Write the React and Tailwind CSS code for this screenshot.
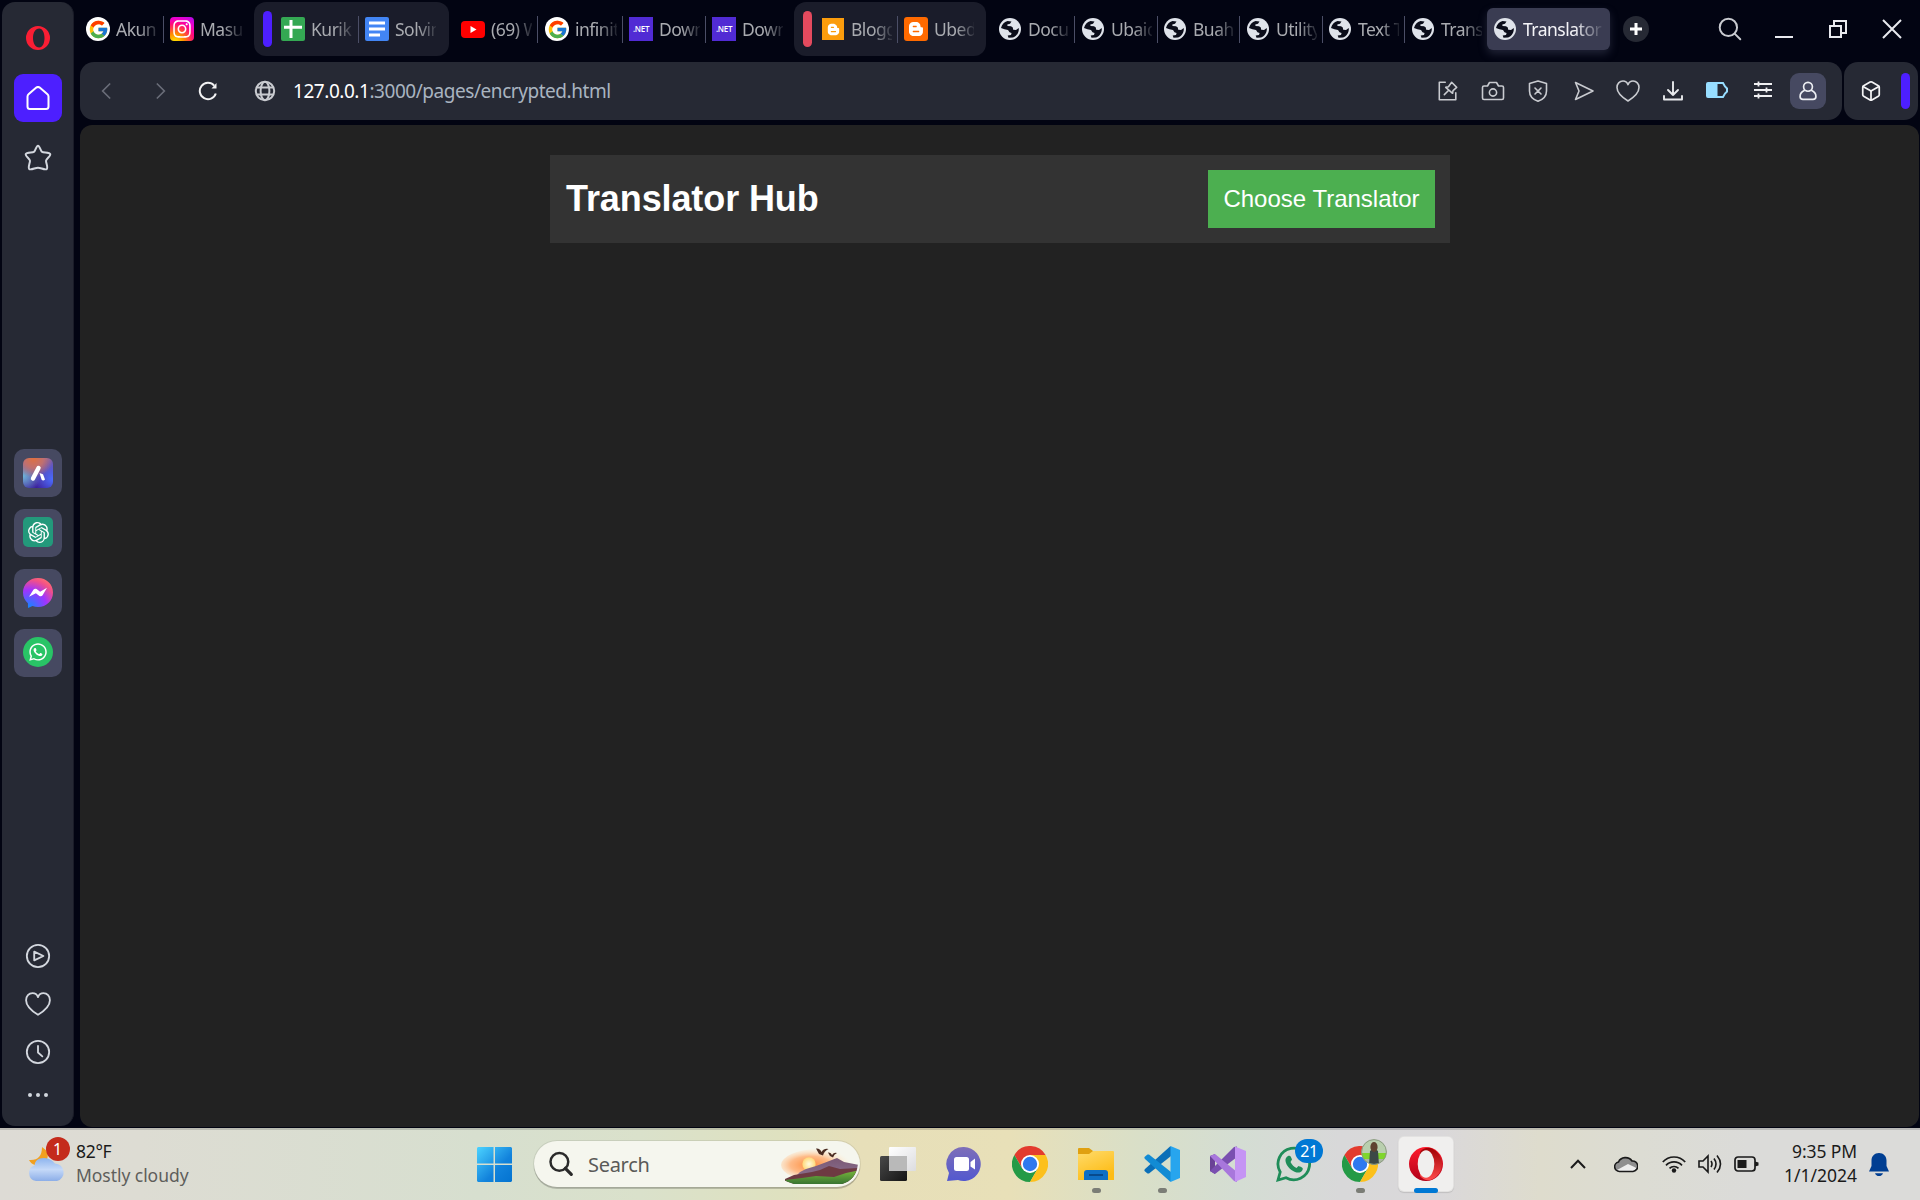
import React from "react";
import { FcGoogle } from "react-icons/fc";
import { FaWhatsapp, FaInstagram, FaBloggerB } from "react-icons/fa";
import { SiOpenai } from "react-icons/si";
import { Box } from "lucide-react";

const UI = "font-['Noto_Sans','Open_Sans',sans-serif]";

function Line({ size = 24, sw = 1.7, children, className = "" }) {
  return (
    <svg
      width={size}
      height={size}
      viewBox="0 0 24 24"
      fill="none"
      stroke="currentColor"
      strokeWidth={sw}
      strokeLinecap="round"
      strokeLinejoin="round"
      className={"block shrink-0 " + className}
    >
      {children}
    </svg>
  );
}

const HeartPath = () => (
  <path d="M12 22C8.500 19.800 1 14.500 1 8.500C1 4.800 3.500 2 7 2C9.500 2 11.200 3.600 12 5.600C12.800 3.600 14.500 2 17 2C20.500 2 23 4.800 23 8.500C23 14.500 15.500 19.800 12 22Z" />
);

/* ---------- favicons ---------- */

const GoogleIcon = () => (
  <span className="flex size-6 shrink-0 items-center justify-center rounded-full bg-white">
    <FcGoogle size={21} />
  </span>
);
const InstaIcon = () => (
  <span className="flex size-6 shrink-0 items-center justify-center rounded-[4px] bg-[radial-gradient(circle_at_20%_110%,#ffd500_10%,#ff8a00_30%,#ff0a7a_60%,#f000c8_75%,#8a10ff_110%)]">
    <FaInstagram size={20} color="white" />
  </span>
);
const SheetIcon = () => (
  <svg width="24" height="24" viewBox="0 0 24 24" className="shrink-0">
    <rect width="24" height="24" rx="2" fill="#34a853" />
    <path d="M3 10.200H21M10 3V21" stroke="#fff" strokeWidth="3" />
  </svg>
);
const DocIcon = () => (
  <svg width="24" height="24" viewBox="0 0 24 24" className="shrink-0">
    <rect width="24" height="24" rx="2" fill="#4285f4" />
    <path d="M4 6H20M4 12H20M4 18H15" stroke="#fff" strokeWidth="3" />
  </svg>
);
const YouTubeIcon = () => (
  <svg width="24" height="24" viewBox="0 0 24 24" className="shrink-0">
    <rect y="4" width="24" height="17" rx="4" fill="#f00" />
    <path d="M9.500 9V16L15.500 12.500Z" fill="#fff" />
  </svg>
);
const NetIcon = () => (
  <span className="flex size-6 shrink-0 items-center justify-center bg-[#512bd4] font-['Open_Sans',sans-serif] text-[8px] font-semibold tracking-[-0.3px] text-white">
    .NET
  </span>
);
const BlogYellow = () => (
  <span className="flex size-6 shrink-0 items-center justify-center">
    <span className="flex size-[22px] items-center justify-center bg-[#fb9c0c]">
      <FaBloggerB size={13} color="white" />
    </span>
  </span>
);
const BlogOrange = () => (
  <span className="flex size-6 shrink-0 items-center justify-center rounded-[3px] bg-[#ff6a00]">
    <FaBloggerB size={16} color="white" />
  </span>
);
const World = () => (
  <svg width="24" height="24" viewBox="0 0 24 24" className="shrink-0">
    <circle cx="12" cy="12" r="11" fill="#dfe3ea" />
    <path
      d="M3 11C4 7.500 6 5 9.500 4L13.500 4.500L12 6.700L9.300 7.500L9.500 9L13 9.300L14.800 10.500L15.200 12.800L18 13L20.800 11C21.200 15.500 18.500 19.300 15 20.500L10.500 20.800L9.700 18.600L13 18L13.600 16L11.500 15.200L10 13L6.500 12.300Z"
      fill="#0b0d1a"
    />
  </svg>
);

/* ---------- tab strip ---------- */

function Tab({ icon, text, width = "w-[84px]", divider = true, tw = "w-[42px]" }) {
  return (
    <div className={"flex h-[54px] shrink-0 items-center " + width}>
      {icon}
      <span
        className={
          "ml-[6px] overflow-hidden whitespace-nowrap text-[17.5px] leading-[26px] tracking-[-0.5px] text-[#a9abb0] [mask-image:linear-gradient(to_right,black_55%,transparent_108%)] " +
          tw
        }
      >
        {text}
      </span>
      {divider && <span className="ml-[5px] h-[27px] w-px shrink-0 bg-[#4b4e66]" />}
    </div>
  );
}

function TabStrip() {
  return (
    <div className="flex h-[62px] items-start pt-[2px]">
      <div className="flex w-[174px] shrink-0 pl-[6px]">
        <Tab icon={<GoogleIcon />} text="Akun" />
        <Tab icon={<InstaIcon />} text="Masu" divider={false} />
      </div>
      <div className="flex h-[54px] w-[195px] shrink-0 items-center rounded-[12px] bg-[#1a1c2a] pl-[9px]">
        <span className="mr-[9px] h-9 w-[9px] rounded-full bg-[#4d1fff]" />
        <Tab icon={<SheetIcon />} text="Kurik" />
        <Tab icon={<DocIcon />} text="Solvin" divider={false} width="w-[78px]" tw="w-[41px]" />
      </div>
      <div className="flex w-[345px] shrink-0 pl-[12px]">
        <Tab icon={<YouTubeIcon />} text="(69) W" tw="w-[41px]" />
        <Tab icon={<GoogleIcon />} text="infinit" />
        <Tab icon={<NetIcon />} text="Down" width="w-[83px]" tw="w-[41px]" />
        <Tab icon={<NetIcon />} text="Down" divider={false} width="w-[72px]" tw="w-[41px]" />
      </div>
      <div className="flex h-[54px] w-[192px] shrink-0 items-center rounded-[12px] bg-[#1a1c2a] pl-[9px]">
        <span className="mr-[9px] h-9 w-[9px] rounded-full bg-[#e44a5e]" />
        <Tab icon={<BlogYellow />} text="Blogg" width="w-[83px]" tw="w-[41px]" />
        <Tab icon={<BlogOrange />} text="Ubed" divider={false} width="w-[76px]" tw="w-[40px]" />
      </div>
      <div className="flex shrink-0 pl-[12px]">
        <Tab icon={<World />} text="Docu" width="w-[83px]" tw="w-[41px]" />
        <Tab icon={<World />} text="Ubaid" width="w-[82px]" tw="w-[41px]" />
        <Tab icon={<World />} text="Buah" width="w-[83px]" tw="w-[41px]" />
        <Tab icon={<World />} text="Utility" width="w-[82px]" tw="w-[41px]" />
        <Tab icon={<World />} text="Text T" width="w-[83px]" tw="w-[41px]" />
        <Tab icon={<World />} text="Trans" width="w-[76px]" divider={false} tw="w-[41px]" />
      </div>
      <div className="mt-[6px] flex h-[42px] w-[123px] shrink-0 items-center rounded-[6px] bg-[#3a3c52] pl-[6px] shadow-[0_4px_8px_rgba(90,92,120,0.35)]">
        <World />
        <span className="ml-[6px] w-[79px] overflow-hidden whitespace-nowrap text-[17.5px] leading-[26px] tracking-[-0.5px] text-[#f4f4f8] [mask-image:linear-gradient(to_right,black_65%,transparent_103%)]">
          Translator
        </span>
      </div>
      <div className="mt-[14px] ml-[13px] flex size-[26px] shrink-0 items-center justify-center rounded-full bg-[#262934] text-white">
        <Line size={24} sw={3}>
          <path d="M12 6V18M6 12H18" strokeLinecap="butt" />
        </Line>
      </div>
      <div className="flex h-[54px] flex-1 items-center pl-[68px] text-[#e8e9ee]">
        <Line size={26} sw={1.8} className="text-[#c9cbd0]">
          <circle cx="10.500" cy="10.500" r="8" />
          <path d="M16.500 16.500L21.500 21.500" />
        </Line>
        <svg width="20" height="20" viewBox="0 0 20 20" className="ml-[31px]">
          <path d="M1 18H19" stroke="currentColor" strokeWidth="2" />
        </svg>
        <svg width="20" height="20" viewBox="0 0 20 20" fill="none" stroke="currentColor" strokeWidth="2" className="ml-[34px]">
          <path d="M2 7H13V18H2ZM6 7V2H18V14H13" />
        </svg>
        <svg width="20" height="20" viewBox="0 0 20 20" stroke="currentColor" strokeWidth="2" className="ml-[34px]">
          <path d="M1 1L19 19M19 1L1 19" />
        </svg>
      </div>
    </div>
  );
}

/* ---------- address bar ---------- */

const Cell = ({ children }) => <span className="flex w-[45px] shrink-0 items-center justify-center">{children}</span>;

function AddressBar() {
  return (
    <div className="flex h-[58px] gap-[2px] pr-[2px]">
      <div className="flex flex-1 items-center rounded-[14px] bg-[#262934] text-[#c9cbd0]">
        <Line size={20} sw={2} className="ml-[16px] text-[#6a6d78]">
          <path d="M17 3L8 12L17 21" strokeLinecap="butt" strokeLinejoin="miter" />
        </Line>
        <Line size={20} sw={2} className="ml-[35px] text-[#6a6d78]">
          <path d="M7 3L16 12L7 21" strokeLinecap="butt" strokeLinejoin="miter" />
        </Line>
        <svg width="20" height="20" viewBox="0 0 20 20" fill="none" stroke="#f2f2f4" strokeWidth="2" className="ml-[27px]">
          <path d="M17.800 12.500A8.200 8.200 0 1 1 16.200 4.600" />
          <path d="M18.500 2V7.500H13.500Z" fill="#f2f2f4" stroke="none" />
        </svg>
        <svg width="22" height="22" viewBox="0 0 22 22" fill="none" stroke="#c9cbd0" strokeWidth="2" className="ml-[36px]">
          <circle cx="11" cy="11" r="9.200" />
          <ellipse cx="11" cy="11" rx="4.400" ry="9.200" />
          <path d="M2.500 7.500H19.500M2.500 14.500H19.500" />
        </svg>
        <span className="ml-[17px] text-[19px] tracking-[-0.45px] whitespace-nowrap text-[#a9b4c0]">
          <span className="text-white">127.0.0.1</span>:3000/pages/encrypted.html
        </span>
        <div className="ml-auto flex pr-[12px]">
          <Cell>
            <Line size={22} sw={1.7}>
              <path d="M9 2.500H2.500V21.500H20.500V14" />
              <path d="M16 2.500L21.500 8L17.500 11.500L17 14.500L9.500 8L12.500 7.300ZM12.800 11.200L8 16" />
            </Line>
          </Cell>
          <Cell>
            <Line size={24} sw={1.6}>
              <path d="M3 7H6.500L8.500 3.500H15.500L17.500 7H21C22 7 22.500 7.500 22.500 8.500V19C22.500 20 22 20.500 21 20.500H3C2 20.500 1.500 20 1.500 19V8.500C1.500 7.500 2 7 3 7Z" />
              <circle cx="12" cy="13.500" r="3.600" />
            </Line>
          </Cell>
          <Cell>
            <Line size={24} sw={1.6}>
              <path d="M12 2L20.500 4.500V12C20.500 17 17 20.500 12 22.300C7 20.500 3.500 17 3.500 12V4.500ZM9 9L15 15M15 9L9 15" />
            </Line>
          </Cell>
          <Cell>
            <Line size={24} sw={1.6} className="ml-[2px]">
              <path d="M3.500 3.500L21 12L3.500 20.500L7 12Z" />
            </Line>
          </Cell>
          <Cell>
            <Line size={24} sw={1.6}>
              <HeartPath />
            </Line>
          </Cell>
          <Cell>
            <Line size={24} sw={1.9} className="text-[#e8e9ec]">
              <path d="M12 3V16M7 11L12 16L17 11M3 17V20.500H21V17" />
            </Line>
          </Cell>
          <Cell>
            <svg width="24" height="18" viewBox="0 0 24 18" className="-mt-[2px] -ml-[2px]">
              <path d="M3 2H18L20 5.500L22 7.500V10.500L20 12.500L18 16H3Q2 16 2 15V3Q2 2 3 2Z" fill="none" stroke="#97ddff" strokeWidth="2" />
              <rect x="2" y="2" width="10.500" height="14" fill="#97ddff" />
            </svg>
          </Cell>
          <Cell>
            <svg width="20" height="18" viewBox="0 0 20 18" stroke="#f0f0f2" strokeWidth="1.800" className="-mt-[2px]">
              <path d="M1 3H19M1 9H19M1 15H19M5.500 0.500V5.500M13.500 6.500V11.500M5.500 12.500V17.500" />
            </svg>
          </Cell>
          <Cell>
            <span className="flex size-9 items-center justify-center rounded-[9px] bg-[#464961] text-[#eceef2]">
              <Line size={20} sw={2}>
                <circle cx="12" cy="7" r="5.300" />
                <path d="M7.500 11.500C4.500 13 2.500 15.500 2.500 18.500C2.500 20.800 4 22 6 22H18C20 22 21.500 20.800 21.500 18.500C21.500 15.500 19.500 13 16.500 11.500" />
              </Line>
            </span>
          </Cell>
        </div>
      </div>
      <div className="flex w-[74px] items-center rounded-[14px] bg-[#262934] pl-[16px]">
        <Box size={22} strokeWidth={1.9} color="#f4f4f6" />
        <span className="ml-[19px] h-9 w-[9px] rounded-full bg-[#4d1fff]" />
      </div>
    </div>
  );
}

/* ---------- sidebar ---------- */

const SideTile = ({ children }) => (
  <div className="mb-3 flex size-12 items-center justify-center rounded-[10px] bg-[#464961]">{children}</div>
);

function Sidebar() {
  return (
    <aside className="mt-[2px] ml-[2px] flex h-[1124px] w-[72px] shrink-0 flex-col items-center rounded-[13px] border-r border-[#1a1c28] bg-[#262934] text-[#d3d7de]">
      <svg width="24" height="24" viewBox="0 0 24 24" className="mt-[24px]">
        <path
          d="M12 0A12 12 0 0 0 12 24A12 12 0 0 0 12 0ZM13.200 2.500C16.600 2.500 18.500 7 18.500 12S16.600 21.500 13.200 21.500C9.500 21.500 7 17.500 7 12S9.500 2.500 13.200 2.500Z"
          fill="#fa1e34"
          fillRule="evenodd"
        />
      </svg>
      <div className="mt-[24px] flex size-12 items-center justify-center rounded-[9px] bg-[#4d1fff] text-white">
        <Line size={24} sw={2}>
          <path d="M1.500 10.500C1.500 9.500 2 8.700 2.800 8L10.300 1.600C11.500 0.700 12.500 0.700 13.700 1.600L21.200 8C22 8.700 22.500 9.500 22.500 10.500V20.500C22.500 22 21.500 23 20 23H4C2.500 23 1.500 22 1.500 20.500Z" />
        </Line>
      </div>
      <Line size={28} sw={1.7} className="mt-[22px]">
        <path d="M12 1.500C13.600 1.500 14.100 6 15.500 6.800C16.900 7.600 21.900 6.900 22.500 8.700C23 10.300 19.200 12.600 18.900 14.200C18.600 15.800 20.900 20.200 19.500 21.500C18 22.600 14.200 20.300 12 20.300C9.800 20.300 6 22.600 4.500 21.500C3.100 20.200 5.400 15.800 5.100 14.200C4.800 12.600 1 10.300 1.500 8.700C2.100 6.900 7.100 7.600 8.500 6.800C9.900 6 10.400 1.500 12 1.500Z" />
      </Line>
      <div className="mt-[277px] flex flex-col">
        <SideTile>
          <span className="flex size-[30px] items-center justify-center rounded-[6px] bg-[radial-gradient(circle_at_35%_0%,#e0703f_0%,#c07070_28%,transparent_55%),radial-gradient(circle_at_100%_70%,#4a6cff_0%,transparent_50%),radial-gradient(circle_at_0%_60%,#6fb4d8_0%,transparent_50%),linear-gradient(#7b62b0,#3a1f9c)]">
            <svg width="20" height="20" viewBox="0 0 20 20">
              <path d="M5 15.500L10.500 5" stroke="#fff" strokeWidth="4.400" strokeLinecap="round" />
              <path d="M11.500 10L15 11.200L17 16.500Q15 18.500 13.500 16.500Z" fill="#fff" />
            </svg>
          </span>
        </SideTile>
        <SideTile>
          <span className="-mt-[2px] ml-px flex size-[30px] items-center justify-center rounded-[5px] bg-[#23997b]">
            <SiOpenai size={21} color="white" />
          </span>
        </SideTile>
        <SideTile>
          <svg width="30" height="30" viewBox="0 0 30 30">
            <defs>
              <radialGradient id="msg" cx="0.200" cy="1" r="1.100">
                <stop offset="0" stopColor="#1088ff" />
                <stop offset="0.550" stopColor="#a033ff" />
                <stop offset="0.850" stopColor="#f0508a" />
                <stop offset="1" stopColor="#ff6a70" />
              </radialGradient>
            </defs>
            <path d="M15 0C6.500 0 0 6.200 0 14.500C0 19 1.800 22.500 4.900 25.200L5 30L9.500 28C11.200 28.600 13 29 15 29C23.500 29 30 22.800 30 14.500S23.500 0 15 0Z" fill="url(#msg)" />
            <path d="M6 18.700L10.400 11.700C11.100 10.600 12.600 10.300 13.600 11.100L17.100 13.700L24 9.800L19.600 17.300C18.900 18.400 17.400 18.700 16.400 17.900L12.900 15.300Z" fill="#fff" />
          </svg>
        </SideTile>
        <SideTile>
          <span className="-mt-[2px] flex size-[30px] items-center justify-center rounded-full bg-[#29c466]">
            <FaWhatsapp size={20} color="white" />
          </span>
        </SideTile>
      </div>
      <Line size={26} sw={1.7} className="mt-[254px]">
        <circle cx="12" cy="12" r="10.300" />
        <path d="M8.500 8V16L17 12Z" />
      </Line>
      <Line size={26} sw={1.7} className="mt-[22px]">
        <HeartPath />
      </Line>
      <Line size={26} sw={1.7} className="mt-[22px]">
        <circle cx="12" cy="12" r="10.300" />
        <path d="M12 6.500V12.500L16 16" />
      </Line>
      <div className="mt-[28px] flex gap-[4px]">
        <span className="size-[4px] rounded-full bg-[#d3d7de]" />
        <span className="size-[4px] rounded-full bg-[#d3d7de]" />
        <span className="size-[4px] rounded-full bg-[#d3d7de]" />
      </div>
    </aside>
  );
}

/* ---------- taskbar ---------- */

function Chrome() {
  return (
    <svg width="36" height="36" viewBox="0 0 36 36">
      <path d="M18 9H33.600A18 18 0 0 0 2.400 9L10.200 22.500Z" fill="#e33b2e" />
      <path d="M2.400 9L10.200 22.500L18 27L25.800 22.500L18 36A18 18 0 0 1 2.400 9Z" fill="#249a46" />
      <path d="M25.800 22.500L18 36A18 18 0 0 0 33.600 9H18Z" fill="#fcc01c" />
      <circle cx="18" cy="18" r="9" fill="#fff" />
      <circle cx="18" cy="18" r="7.200" fill="#2f79ee" />
    </svg>
  );
}

const TaskApp = ({ children, dot }) => (
  <div className="relative flex h-[68px] w-[66px] shrink-0 items-center justify-center">
    {children}
    {dot && <span className="absolute bottom-[5px] left-[28.5px] h-[5px] w-[9px] rounded-full bg-[#7b7d76]" />}
  </div>
);

function SearchArt() {
  return (
    <svg width="80" height="44" viewBox="0 0 80 44" className="block">
      <defs>
        <radialGradient id="glow" cx="0.400" cy="0.500" r="0.550">
          <stop offset="0" stopColor="#ff8a3a" />
          <stop offset="0.500" stopColor="#ffb47c" stopOpacity="0.900" />
          <stop offset="1" stopColor="#fff3d8" stopOpacity="0" />
        </radialGradient>
        <linearGradient id="mt" x1="0" y1="0" x2="0" y2="1">
          <stop offset="0" stopColor="#7a5874" />
          <stop offset="1" stopColor="#8d7696" />
        </linearGradient>
        <linearGradient id="grass" x1="0" y1="0" x2="0" y2="1">
          <stop offset="0" stopColor="#7ab83c" />
          <stop offset="1" stopColor="#2f6b30" />
        </linearGradient>
        <radialGradient id="sun">
          <stop offset="0" stopColor="#fffbe0" />
          <stop offset="1" stopColor="#ffd878" />
        </radialGradient>
        <clipPath id="pill">
          <path d="M0 0H62Q78 6 78 22Q76 38 62 42H14L0 37Z" />
        </clipPath>
      </defs>
      <ellipse cx="38" cy="23" rx="37" ry="16" fill="url(#glow)" />
      <g clipPath="url(#pill)">
        <circle cx="29" cy="22" r="6.700" fill="url(#sun)" />
        <path d="M14 36L20 30L26 27L36 24L44 21L57 16L64 20L80 23V40H14Z" fill="url(#mt)" />
        <path d="M5 37L14 33L32 30L40 28L49 24L60 27L80 26V42H5Z" fill="#6e3a42" />
        <path d="M5 38L22 36L36 34L54 35L66 31L80 28V44H12Z" fill="url(#grass)" />
      </g>
      <path d="M36 6.500Q40 6 41.500 10Q44 6 48.500 7Q44 9 43 13.500L39 12ZM48 10.500Q51 10 52 13Q54 10 57 11Q54 12 53 15.500L50 14Z" fill="#4a2c22" />
    </svg>
  );
}

function Taskbar() {
  return (
    <div className="flex h-[72px] w-full items-center border-t-2 border-black/15 bg-[linear-gradient(to_right,#dddbd5_0px,#dddcd3_140px,#d7dfcf_480px,#dae1cb_640px,#dfe1bf_790px,#e7dfb9_860px,#e8e0b8_1010px,#d9dfc8_1140px,#d4ddd3_1240px,#d8d8d9_1340px,#dad8da_1440px,#dedccd_1540px,#dcdcd3_1640px,#dbdbd9_1750px,#dbdbd9_1920px)] pb-[2px] text-[#1a1a1a]">
      <div className="flex w-[477px] shrink-0 items-center pl-[28px]">
        <div className="relative h-[44px] w-[42px]">
          <svg width="38" height="38" viewBox="0 0 38 38" className="mt-[4px]">
            <defs>
              <linearGradient id="cl" x1="0" y1="0" x2="0" y2="1">
                <stop offset="0" stopColor="#8db4ee" />
                <stop offset="0.500" stopColor="#c5d9f8" />
                <stop offset="1" stopColor="#8caee8" />
              </linearGradient>
            </defs>
            <path d="M14 1Q22 6 19 14Q16 20 7 19Q3 18 1 14Q14 15 14 1Z" fill="#f2a020" />
            <path d="M8 35A8 8 0 0 1 6.500 19.500A8 8 0 0 1 12 12.500A13 11 0 0 1 27 17.500A8.900 8.900 0 0 1 29 35Z" fill="url(#cl)" />
          </svg>
          <span className="absolute top-[-5px] left-[17.5px] flex size-6 items-center justify-center rounded-full bg-[#c42b1c] text-[16px] text-white">1</span>
        </div>
        <div className="-mt-[2px] ml-[6px] text-[17.5px] leading-[24px] tracking-[-0.05px]">
          <div className="tracking-[-0.3px]">82°F</div>
          <div className="text-[#5e5e5b]">Mostly cloudy</div>
        </div>
      </div>
      <svg width="35" height="35" viewBox="0 0 35 35" className="shrink-0">
        <defs>
          <linearGradient id="win" x1="0" y1="0" x2="1" y2="1">
            <stop offset="0" stopColor="#4cd3ff" />
            <stop offset="0.600" stopColor="#1283dc" />
            <stop offset="1" stopColor="#0473d0" />
          </linearGradient>
        </defs>
        <path d="M1 0H16.500V16.500H0V1ZM18 0H34L35 1V16.500H18ZM0 18H16.500V35H1L0 34ZM18 18H35V34L34 35H18Z" fill="url(#win)" />
      </svg>
      <div className="ml-[22px] flex h-[46px] w-[326px] shrink-0 items-center rounded-full bg-[#f5f6ee] pl-[14px] shadow-[0_0_0_1px_rgba(0,0,0,0.08),0_2px_0_rgba(0,0,0,0.18)]">
        <Line size={26} sw={2.3} className="text-[#2a2a2a]">
          <circle cx="10.500" cy="10" r="8.200" />
          <path d="M16 16L21.500 21.500" strokeWidth="3" />
        </Line>
        <span className="mt-px ml-[14px] text-[20px] tracking-[-0.3px] text-[#5a5a58]">Search</span>
        <span className="ml-auto">
          <SearchArt />
        </span>
      </div>
      <div className="ml-[5px] flex shrink-0">
        <TaskApp>
          <svg width="36" height="36" viewBox="0 0 36 36">
            <defs>
              <linearGradient id="tv" x1="0" y1="0" x2="1" y2="1">
                <stop offset="0" stopColor="#4a4a4a" />
                <stop offset="1" stopColor="#141414" />
              </linearGradient>
              <linearGradient id="tw" x1="0" y1="0" x2="1" y2="1">
                <stop offset="0" stopColor="#ffffff" />
                <stop offset="1" stopColor="#dcdcdf" />
              </linearGradient>
            </defs>
            <rect x="0" y="10" width="27" height="25" rx="1.500" fill="url(#tv)" />
            <rect x="9" y="1" width="27" height="24" rx="1" fill="url(#tw)" />
            <rect x="9" y="10" width="18" height="15" fill="#b9b9b9" />
          </svg>
        </TaskApp>
        <TaskApp>
          <svg width="36" height="36" viewBox="0 0 36 36">
            <defs>
              <linearGradient id="chat" x1="0" y1="0" x2="0" y2="1">
                <stop offset="0" stopColor="#7e6fb8" />
                <stop offset="1" stopColor="#5258cf" />
              </linearGradient>
            </defs>
            <path d="M18 1A17 17 0 1 1 12 34L1 35L3 27A17 17 0 0 1 18 1Z" fill="url(#chat)" />
            <rect x="8" y="11" width="15" height="14" rx="2.500" fill="#fff" />
            <path d="M24.500 16L29 12.500V23.500L24.500 20.500Z" fill="#fff" />
          </svg>
        </TaskApp>
        <TaskApp>
          <Chrome />
        </TaskApp>
        <TaskApp dot>
          <svg width="36" height="36" viewBox="0 0 36 36">
            <defs>
              <linearGradient id="fold" x1="0" y1="0" x2="0.500" y2="1">
                <stop offset="0" stopColor="#ffdb6b" />
                <stop offset="1" stopColor="#fdbc16" />
              </linearGradient>
            </defs>
            <path d="M0 3Q0 2 1 2H11L15 5H35V12H0Z" fill="#e0a010" />
            <path d="M0 8H11L15 5H35Q36 5 36 6V34H0Z" fill="url(#fold)" />
            <path d="M6 34V27Q6 24 9 24H27Q30 24 30 27V34Z" fill="#0f6fc4" />
            <path d="M11 29H25" stroke="#084a8c" strokeWidth="2" />
          </svg>
        </TaskApp>
        <TaskApp dot>
          <svg width="36" height="36" viewBox="0 0 36 36">
            <path d="M27 0.500V10L5 27.500L3.500 27.500L0.500 25Q0 24 1 23L26 0.500Z" fill="#0b6fb8" />
            <path d="M27 35.500V26L5 8.500L3.500 8.500L0.500 11Q0 12 1 13L26 35.500Z" fill="#128bd4" />
            <path d="M26.500 0L36 4V32L26.500 36Z" fill="#27a5ee" />
          </svg>
        </TaskApp>
        <TaskApp>
          <svg width="36" height="36" viewBox="0 0 36 36">
            <path d="M0 10L5 8V28L0 25Z" fill="#6a4296" />
            <path d="M0 25L5 28L27 11V0.500L24 1Z" fill="#7a4fb0" />
            <path d="M0 10L5 8L27 26V36L24 35Z" fill="#a877dc" />
            <path d="M25 0.500L36 5V31L25 36Z" fill="#c594f4" />
          </svg>
        </TaskApp>
        <TaskApp>
          <svg width="36" height="36" viewBox="0 0 36 36">
            <path d="M2 34L4.200 26A15.800 15.800 0 1 1 10 31.700Z" fill="none" stroke="#1f8d59" strokeWidth="2.800" />
            <path d="M12 10C14 9 15 10 16 13.500L14.500 16C16 19 18 21 20.500 22L22.500 20C26 21 27.500 22 26.500 24C25 27 22 27 19 26C14 24 10 19 9.500 15Q9 12 12 10Z" fill="#1f8d59" />
          </svg>
          <span className="absolute top-[9px] left-[34px] flex h-[24px] w-[28px] items-center justify-center rounded-full bg-[#0078d4] text-[16px] leading-none tracking-[-0.5px] text-white">
            21
          </span>
        </TaskApp>
        <TaskApp dot>
          <Chrome />
          <svg width="26" height="26" viewBox="0 0 26 26" className="absolute top-[9px] left-[34px]">
            <defs>
              <clipPath id="av">
                <circle cx="13" cy="13" r="12.500" />
              </clipPath>
            </defs>
            <g clipPath="url(#av)">
              <rect width="26" height="26" fill="#b9cfae" />
              <rect y="14" width="26" height="6" fill="#7fd62c" />
              <rect y="20" width="26" height="6" fill="#a9b8a0" />
              <path d="M8 26L9 12L13 9L17 12L18 26Z" fill="#3c4846" />
              <ellipse cx="13" cy="8" rx="3.600" ry="5" fill="#5f4330" />
            </g>
            <circle cx="13" cy="13" r="12.400" fill="none" stroke="#8b9a80" />
          </svg>
        </TaskApp>
        <TaskApp>
          <span className="relative flex h-[56px] w-[56px] items-center justify-center rounded-[6px] border border-black/5 bg-[#f0efee] shadow-[0_1px_1px_rgba(0,0,0,0.12)]">
            <svg width="36" height="36" viewBox="0 0 36 36">
              <defs>
                <linearGradient id="opa" x1="0" y1="0" x2="0" y2="1">
                  <stop offset="0" stopColor="#ff1b2d" />
                  <stop offset="1" stopColor="#b00018" />
                </linearGradient>
                <linearGradient id="opb" x1="0" y1="0" x2="0" y2="1">
                  <stop offset="0" stopColor="#a00004" />
                  <stop offset="1" stopColor="#ff4b4b" />
                </linearGradient>
              </defs>
              <ellipse cx="18" cy="18" rx="17" ry="17" fill="url(#opa)" />
              <path d="M12 6C15 2 20 1 24 2.500A17 17 0 0 1 24 33.500C20 35 15 34 12 30Z" fill="url(#opb)" />
              <ellipse cx="18" cy="18" rx="8.300" ry="13.700" fill="#f0efee" />
            </svg>
          </span>
          <span className="absolute bottom-[5px] left-[21px] h-[5px] w-[24px] rounded-full bg-[#0078d4]" />
        </TaskApp>
      </div>
      <div className="ml-auto flex shrink-0 items-center pr-[31px]">
        <svg width="16" height="10" viewBox="0 0 16 10" className="mr-[28px]">
          <path d="M1 9L8 1.800L15 9" fill="none" stroke="#1a1a1a" strokeWidth="2" />
        </svg>
        <svg width="24" height="18" viewBox="0 0 24 18" className="mr-[24px]">
          <path d="M5.500 16.500A4.800 4.800 0 0 1 4.500 7A7.500 6.800 0 0 1 18 6A5 5 0 0 1 19 16.500Z" fill="#8f8f8f" />
          <path d="M3 15L14 9L22.500 13L20 16.500H5Z" fill="#ededed" />
          <path d="M5.500 16.500A4.800 4.800 0 0 1 4.500 7A7.500 6.800 0 0 1 18 6A5 5 0 0 1 19 16.500Z" fill="none" stroke="#1a1a1a" strokeWidth="1.600" />
        </svg>
        <svg width="24" height="18" viewBox="0 0 24 18" className="mr-[12px]" fill="none" stroke="#1a1a1a" strokeWidth="1.700">
          <path d="M0.800 7A15 15 0 0 1 23.200 7M4 10.300A11 11 0 0 1 20 10.300M7.500 13.300A6.500 6.500 0 0 1 16.500 13.300" />
          <circle cx="12" cy="15.500" r="2.200" fill="#1a1a1a" stroke="none" />
        </svg>
        <svg width="24" height="20" viewBox="0 0 24 20" className="mr-[12px]" fill="none" stroke="#1a1a1a" strokeWidth="1.600">
          <path d="M1 7H5L10 2V18L5 13H1Z" />
          <path d="M13 7Q15 10 13 13M16 4.500Q20 10 16 15.500M19 1.500Q26 10 19 18.500" />
        </svg>
        <svg width="25" height="16" viewBox="0 0 25 16" className="mr-[25px]">
          <rect x="1" y="1" width="20" height="14" rx="3" fill="none" stroke="#1a1a1a" strokeWidth="1.700" />
          <rect x="3.500" y="4" width="9" height="8" fill="#1a1a1a" />
          <path d="M21 5.500L24.500 6.500V9.500L21 10.500Z" fill="#1a1a1a" />
        </svg>
        <div className="-mt-[2px] flex w-[73px] flex-col items-end text-[17.5px] leading-[24px] whitespace-nowrap">
          <div className="tracking-[-0.1px]">9:35 PM</div>
          <div className="tracking-[-0.02px]">1/1/2024</div>
        </div>
        <svg width="20" height="23" viewBox="0 0 20 23" className="ml-[12px]">
          <path d="M10 0C14.500 0 17.500 3.200 17.500 7.500V13L20 18.500H0L2.500 13V7.500C2.500 3.200 5.500 0 10 0Z" fill="#003e92" />
          <path d="M6 20.200H14Q13 23 10 23T6 20.200Z" fill="#003e92" />
        </svg>
      </div>
    </div>
  );
}

export default function App() {
  return (
    <div className={"flex h-[1200px] w-[1920px] flex-col overflow-hidden bg-[#020412] " + UI}>
      <div className="flex h-[1128px]">
        <Sidebar />
        <div className="ml-[6px] flex min-w-0 flex-1 flex-col">
          <TabStrip />
          <AddressBar />
          <main className="mt-[5px] mr-px h-[1002px] rounded-[12px] bg-[#222222] pt-[30px] font-['Liberation_Sans',Arial,sans-serif]">
            <header className="ml-[470px] flex h-[88px] w-[900px] items-center justify-between bg-[#333333] pr-[15px] pl-[16px] text-white">
              <h1 className="text-[36px] leading-[42px] font-bold tracking-[-0.1px]">Translator Hub</h1>
              <button className="h-[58px] w-[227px] bg-[#4caf50] text-[24px] whitespace-nowrap">Choose Translator</button>
            </header>
          </main>
        </div>
      </div>
      <Taskbar />
    </div>
  );
}
